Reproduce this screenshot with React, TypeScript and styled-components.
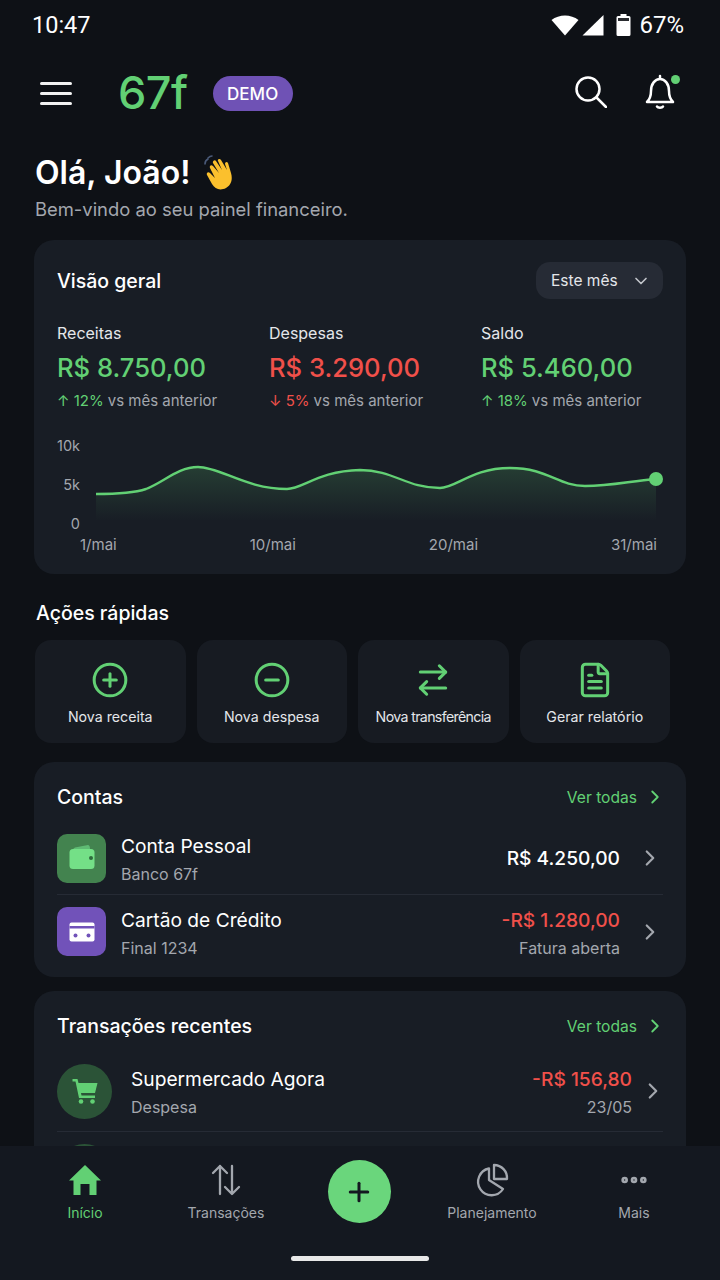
import styled, { createGlobalStyle } from "styled-components";
import {
  ArrowRightLeft,
  ChevronDown,
  ChevronRight,
  CircleMinus,
  CirclePlus,
  Ellipsis,
  FileText,
  Plus,
} from "lucide-react";

const GREEN = "#62d074";
const RED = "#f0504a";

const GlobalStyle = createGlobalStyle`
  html, body {
    margin: 0;
    padding: 0;
    background: #0e1116;
  }
  * {
    box-sizing: border-box;
  }
`;

const Screen = styled.div`
  position: relative;
  width: 720px;
  height: 1280px;
  overflow: hidden;
  background: #0e1116;
  color: #fff;
  font-family: Inter, "Liberation Sans", sans-serif;
`;

const StatusBar = styled.div`
  height: 50px;
  padding: 0 36px 0 32px;
  display: flex;
  align-items: center;
  justify-content: space-between;
`;

const Clock = styled.span`
  font-family: Roboto, sans-serif;
  font-size: 23.5px;
`;

const StatusIcons = styled.div`
  display: flex;
  align-items: center;
  gap: 3px;
`;

const BatteryIcon = styled.svg`
  margin-left: 9px;
`;

const BatteryText = styled.span`
  font-family: Roboto, sans-serif;
  font-size: 24px;
  margin-left: 5px;
`;

const Header = styled.header`
  height: 84px;
  padding: 0 42px 0 40px;
  display: flex;
  align-items: center;
`;

const MenuLines = styled.div`
  width: 32px;
  height: 23px;
  margin-top: 3px;
  display: flex;
  flex-direction: column;
  justify-content: space-between;
  margin-right: 46px;

  span {
    display: block;
    height: 3px;
    border-radius: 2px;
    background: #f2f2f2;
  }
`;

const Logo = styled.span`
  font-size: 45px;
  font-weight: 550;
  color: ${GREEN};
  letter-spacing: -0.5px;
  margin-right: 25px;
`;

const DemoBadge = styled.span`
  width: 80px;
  height: 35px;
  margin-top: 3px;
  border-radius: 18px;
  background: #6f52b5;
  display: flex;
  align-items: center;
  justify-content: center;
  font-size: 17px;
  font-weight: 500;
`;

const HeaderActions = styled.div`
  margin-left: auto;
  display: flex;
  align-items: center;
  gap: 35px;
`;

const BellWrap = styled.div`
  position: relative;
  height: 38px;
`;

const BellDot = styled.span`
  position: absolute;
  top: 2px;
  right: -2px;
  width: 9px;
  height: 9px;
  border-radius: 50%;
  background: ${GREEN};
`;

const Content = styled.main`
  padding: 0 34px;
`;

const Greeting = styled.h1`
  margin: 17px 0 0 1px;
  height: 44px;
  font-size: 32px;
  line-height: 44px;
  font-weight: 600;
  display: flex;
  align-items: center;
  gap: 14px;
`;

const Subtitle = styled.p`
  margin: 2px 0 0 1px;
  height: 24px;
  font-size: 18.4px;
  line-height: 24px;
  color: #a3a7ae;
`;

const Card = styled.section<{ $top?: number; $bottom: number }>`
  margin-top: ${(p) => p.$top ?? 0}px;
  background: #181d25;
  border-radius: 20px;
  padding: 22px 23px ${(p) => p.$bottom}px;
`;

const CardHeader = styled.div`
  display: flex;
  align-items: center;
  justify-content: space-between;
  min-height: 26px;
`;

const CardTitle = styled.h2`
  margin: 0;
  font-size: 19.5px;
  line-height: 26px;
  font-weight: 500;
`;

const PeriodButton = styled.button`
  width: 127px;
  height: 37px;
  border: none;
  border-radius: 14px;
  background: #262b35;
  color: #e4e6ea;
  font-family: inherit;
  font-size: 15.5px;
  display: flex;
  align-items: center;
  justify-content: space-between;
  padding: 0 12px 0 15px;
`;

const Stats = styled.div`
  margin-top: 24px;
  display: grid;
  grid-template-columns: 212px 212px 1fr;
`;

const StatLabel = styled.div`
  font-size: 16px;
  line-height: 20px;
  color: #e4e6ea;
`;

const StatValue = styled.div<{ $color: string }>`
  margin-top: 8px;
  font-size: 25.6px;
  line-height: 34px;
  font-weight: 500;
  color: ${(p) => p.$color};
`;

const StatDelta = styled.div`
  margin-top: 6px;
  font-size: 15px;
  line-height: 20px;
  color: #a3a7ae;
  display: flex;
  align-items: center;
  white-space: nowrap;
`;

const DeltaValue = styled.span<{ $color: string }>`
  color: ${(p) => p.$color};
  display: inline-flex;
  align-items: center;
  gap: 4px;
  margin-right: 4px;
`;

const Chart = styled.div`
  margin-top: 24px;
  display: grid;
  grid-template-columns: 39px 1fr;
  grid-template-rows: 98px 20px;
  row-gap: 2px;
`;

const YAxis = styled.div`
  display: flex;
  flex-direction: column;
  justify-content: space-between;
  align-items: flex-end;
  padding: 2px 16px 0 0;
  width: 39px;
  font-size: 14.5px;
  line-height: 18px;
  color: #a3a7ae;
  white-space: nowrap;
`;

const Plot = styled.svg`
  display: block;
`;

const XAxis = styled.div`
  grid-column: 1 / 3;
  display: flex;
  justify-content: space-between;
  padding-left: 23px;
  padding-right: 6px;
  font-size: 15px;
  line-height: 20px;
  color: #a3a7ae;
`;

const SectionTitle = styled.h2`
  margin: 26px 0 0 2px;
  font-size: 19.5px;
  line-height: 26px;
  font-weight: 500;
`;

const Actions = styled.div`
  margin: 14px 0 0 1px;
  width: 635px;
  display: grid;
  grid-template-columns: repeat(4, 1fr);
  gap: 11px;
`;

const ActionCard = styled.button`
  height: 103px;
  border: none;
  border-radius: 16px;
  background: #171b22;
  color: #e4e6ea;
  font-family: inherit;
  font-size: 14.2px;
  display: flex;
  flex-direction: column;
  align-items: center;
  padding: 21px 0 0;
  gap: 9px;
  white-space: nowrap;
`;

const ActionLabel = styled.span<{ $tight?: boolean }>`
  letter-spacing: ${(p) => (p.$tight ? "-0.65px" : "0")};
`;

const SeeAll = styled.a`
  display: flex;
  align-items: center;
  gap: 7px;
  margin-right: -3px;
  font-size: 15.6px;
  color: ${GREEN};
`;

const Rows = styled.div`
  margin-top: 12px;
`;

const Row = styled.div<{ $height: number; $divider?: boolean }>`
  height: ${(p) => p.$height}px;
  display: flex;
  align-items: center;
  border-bottom: ${(p) => (p.$divider ? "1px solid #262b35" : "none")};
`;

const AccountIcon = styled.div<{ $bg: string }>`
  width: 49px;
  height: 49px;
  border-radius: 10px;
  background: ${(p) => p.$bg};
  display: flex;
  align-items: center;
  justify-content: center;
  margin-right: 15px;
`;

const TransactionIcon = styled.div`
  width: 55px;
  height: 55px;
  border-radius: 50%;
  background: #2b5337;
  display: flex;
  align-items: center;
  justify-content: center;
  margin-right: 19px;
`;

const RowText = styled.div`
  flex: 1;
  padding-top: 3px;
`;

const RowName = styled.div`
  font-size: 19.2px;
  line-height: 26px;
`;

const RowSub = styled.div`
  margin-top: 3px;
  font-size: 16px;
  line-height: 24px;
  color: #a3a7ae;
`;

const RowAmounts = styled.div<{ $gap: number }>`
  text-align: right;
  margin-right: ${(p) => p.$gap}px;

  &:has(> :nth-child(2)) {
    padding-top: 3px;
  }
`;

const Amount = styled.div<{ $color?: string }>`
  font-size: 19.2px;
  line-height: 26px;
  font-weight: 500;
  color: ${(p) => p.$color ?? "#fff"};
`;

const RowChevron = styled(ChevronRight)`
  color: #a3a7ae;
`;

const TransactionChevron = styled(RowChevron)`
  margin-right: -3px;
`;

const Peek = styled(TransactionIcon)`
  margin-top: 12px;
`;

const BottomNav = styled.nav`
  position: absolute;
  left: 0;
  right: 0;
  bottom: 0;
  height: 134px;
  background: #141820;
`;

const Tabs = styled.div`
  display: grid;
  grid-template-columns: 170px 112px 154px 112px 172px;
  padding-top: 14px;
`;

const Tab = styled.div<{ $active?: boolean }>`
  display: flex;
  flex-direction: column;
  align-items: center;
  font-size: 14px;
  line-height: 18px;
  color: ${(p) => (p.$active ? GREEN : "#a3a7ae")};
  gap: 4px;
  white-space: nowrap;
`;

const TabIcon = styled.div`
  height: 40px;
  display: flex;
  align-items: center;
  justify-content: center;
`;

const Fab = styled.button`
  justify-self: center;
  width: 63px;
  height: 63px;
  border: none;
  border-radius: 50%;
  background: #6ad67c;
  color: #141820;
  display: flex;
  align-items: center;
  justify-content: center;
`;

const HomeIndicator = styled.div`
  position: absolute;
  left: 291px;
  bottom: 19px;
  width: 138px;
  height: 5px;
  border-radius: 3px;
  background: #e8e8e8;
`;

const linePath =
  "M0 59 C22 59 38 58 50 54 C68 47 82 32 102 32 C124 32 150 54 191 54 C207 54 222 36 264 35 C298 35 310 53 344 53 C360 53 376 33 414 33 C452 33 462 51 489 51 C516 51 534 46 560 44";

function WaveEmoji() {
  return (
    <svg width="34" height="36" viewBox="0 0 34 36">
      <path d="M4 4c-2 1-3 2-3 5M8 1C6 1 5 2 4 3" stroke="#4a5a78" strokeWidth="1.6" fill="none" strokeLinecap="round" />
      <path
        d="M6 13c-1-2 1-4 3-2l6 7-6-10c-1-2 2-4 3-2l6 9-4-9c-1-2 2-3 3-1l6 10-2-6c0-2 2-3 3-1l3 10c2 7 0 12-5 15-6 3-11 1-14-4L3 20c-1-2 1-4 3-2l5 5z"
        fill="#fbc02d"
      />
    </svg>
  );
}

function App() {
  return (
    <Screen>
      <GlobalStyle />
      <StatusBar>
        <Clock>10:47</Clock>
        <StatusIcons>
          <svg width="28" height="24" viewBox="0 0 28 24">
            <path d="M14 22.500 0.500 7C8 1 20 1 27.500 7z" fill="#fff" />
          </svg>
          <svg width="22" height="24" viewBox="0 0 22 24">
            <path d="M21.500 2v20.500H0.500z" fill="#fff" />
          </svg>
          <BatteryIcon width="15" height="24" viewBox="0 0 15 24">
            <path d="M4.500 1h6v2h2.500a1.500 1.500 0 0 1 1.500 1.500V21.500a1.500 1.500 0 0 1-1.500 1.500H2a1.500 1.500 0 0 1-1.500-1.500V4.500A1.500 1.500 0 0 1 2 3h2.500z" fill="#fff" />
            <rect x="2" y="5" width="11" height="3" fill="#2a2c30" />
          </BatteryIcon>
          <BatteryText>67%</BatteryText>
        </StatusIcons>
      </StatusBar>

      <Header>
        <MenuLines>
          <span />
          <span />
          <span />
        </MenuLines>
        <Logo>67f</Logo>
        <DemoBadge>DEMO</DemoBadge>
        <HeaderActions>
          <svg width="32" height="32" viewBox="0 0 32 32" fill="none" stroke="#fff" strokeWidth="2.500" strokeLinecap="round">
            <circle cx="13" cy="13" r="11.500" />
            <path d="M21.500 21.500 31 31" />
          </svg>
          <BellWrap>
            <svg width="36" height="38" viewBox="0 0 36 38" fill="none" stroke="#fff" strokeWidth="2.500" strokeLinecap="round" strokeLinejoin="round">
              <path d="M18 3v3M5 29c3-3 4-6 4-11 0-7 4-12 9-12s9 5 9 12c0 5 1 8 4 11zM15 33.500c1 1.500 5 1.500 6 0" />
            </svg>
            <BellDot />
          </BellWrap>
        </HeaderActions>
      </Header>

      <Content>
        <Greeting>
          Olá, João! <WaveEmoji />
        </Greeting>
        <Subtitle>Bem-vindo ao seu painel financeiro.</Subtitle>

        <Card $top={19} $bottom={19}>
          <CardHeader>
            <CardTitle>Visão geral</CardTitle>
            <PeriodButton>
              Este mês <ChevronDown size={20} color="#c2c5ca" />
            </PeriodButton>
          </CardHeader>
          <Stats>
            <div>
              <StatLabel>Receitas</StatLabel>
              <StatValue $color={GREEN}>R$ 8.750,00</StatValue>
              <StatDelta>
                <DeltaValue $color={GREEN}>↑ 12%</DeltaValue> vs mês anterior
              </StatDelta>
            </div>
            <div>
              <StatLabel>Despesas</StatLabel>
              <StatValue $color={RED}>R$ 3.290,00</StatValue>
              <StatDelta>
                <DeltaValue $color={RED}>↓ 5%</DeltaValue> vs mês anterior
              </StatDelta>
            </div>
            <div>
              <StatLabel>Saldo</StatLabel>
              <StatValue $color={GREEN}>R$ 5.460,00</StatValue>
              <StatDelta>
                <DeltaValue $color={GREEN}>↑ 18%</DeltaValue> vs mês anterior
              </StatDelta>
            </div>
          </Stats>
          <Chart>
            <YAxis>
              <span>10k</span>
              <span>5k</span>
              <span>0</span>
            </YAxis>
            <Plot width="567" height="98" viewBox="0 0 567 98">
              <defs>
                <linearGradient id="area" x1="0" y1="0" x2="0" y2="1">
                  <stop offset="0" stopColor={GREEN} stopOpacity="0.18" />
                  <stop offset="1" stopColor={GREEN} stopOpacity="0" />
                </linearGradient>
              </defs>
              <path d={`${linePath} L560 86 L0 86 Z`} fill="url(#area)" />
              <path d={linePath} fill="none" stroke={GREEN} strokeWidth="2.400" />
              <circle cx="560" cy="44" r="7" fill={GREEN} />
            </Plot>
            <XAxis>
              <span>1/mai</span>
              <span>10/mai</span>
              <span>20/mai</span>
              <span>31/mai</span>
            </XAxis>
          </Chart>
        </Card>

        <SectionTitle>Ações rápidas</SectionTitle>
        <Actions>
          <ActionCard>
            <CirclePlus size={38} color={GREEN} strokeWidth={1.9} />
            <ActionLabel>Nova receita</ActionLabel>
          </ActionCard>
          <ActionCard>
            <CircleMinus size={38} color={GREEN} strokeWidth={1.9} />
            <ActionLabel>Nova despesa</ActionLabel>
          </ActionCard>
          <ActionCard>
            <ArrowRightLeft size={38} color={GREEN} strokeWidth={1.9} />
            <ActionLabel $tight>Nova transferência</ActionLabel>
          </ActionCard>
          <ActionCard>
            <FileText size={38} color={GREEN} strokeWidth={1.9} />
            <ActionLabel>Gerar relatório</ActionLabel>
          </ActionCard>
        </Actions>

        <Card $top={19} $bottom={9}>
          <CardHeader>
            <CardTitle>Contas</CardTitle>
            <SeeAll>
              Ver todas <ChevronRight size={22} />
            </SeeAll>
          </CardHeader>
          <Rows>
            <Row $height={73} $divider>
              <AccountIcon $bg="#43834f">
                <svg width="28" height="28" viewBox="0 0 28 28">
                  <path d="M5 6c0-1 1-2 2-2.500L20 1c1 0 2 1 2 4H7z" fill="#5fbb74" />
                  <rect x="1.500" y="5" width="25" height="20" rx="3.500" fill="#74e087" />
                  <circle cx="23" cy="14" r="2" fill="#2f6a3d" />
                </svg>
              </AccountIcon>
              <RowText>
                <RowName>Conta Pessoal</RowName>
                <RowSub>Banco 67f</RowSub>
              </RowText>
              <RowAmounts $gap={17}>
                <Amount>R$ 4.250,00</Amount>
              </RowAmounts>
              <RowChevron size={26} />
            </Row>
            <Row $height={73}>
              <AccountIcon $bg="#7152b9">
                <svg width="26" height="20" viewBox="0 0 26 20">
                  <rect x="0.500" y="0.500" width="25" height="19" rx="2" fill="#fff" />
                  <rect x="0.500" y="4" width="25" height="2.500" fill="#7152b9" />
                  <circle cx="6.500" cy="13.500" r="2" fill="#7152b9" />
                  <circle cx="19.500" cy="13.500" r="2" fill="#7152b9" />
                </svg>
              </AccountIcon>
              <RowText>
                <RowName>Cartão de Crédito</RowName>
                <RowSub>Final 1234</RowSub>
              </RowText>
              <RowAmounts $gap={17}>
                <Amount $color={RED}>-R$ 1.280,00</Amount>
                <RowSub>Fatura aberta</RowSub>
              </RowAmounts>
              <RowChevron size={26} />
            </Row>
          </Rows>
        </Card>

        <Card $top={14} $bottom={22}>
          <CardHeader>
            <CardTitle>Transações recentes</CardTitle>
            <SeeAll>
              Ver todas <ChevronRight size={22} />
            </SeeAll>
          </CardHeader>
          <Rows>
            <Row $height={81} $divider>
              <TransactionIcon>
                <svg width="26" height="26" viewBox="0 0 26 26" fill={GREEN}>
                  <path d="M0.500 1h5l1 4h19l-2.500 10H9l0.500 2.500H23V20H7L3.500 3.500h-3z" />
                  <circle cx="9" cy="23.500" r="2.300" />
                  <circle cx="20.500" cy="23.500" r="2.300" />
                </svg>
              </TransactionIcon>
              <RowText>
                <RowName>Supermercado Agora</RowName>
                <RowSub>Despesa</RowSub>
              </RowText>
              <RowAmounts $gap={8}>
                <Amount $color={RED}>-R$ 156,80</Amount>
                <RowSub>23/05</RowSub>
              </RowAmounts>
              <TransactionChevron size={26} />
            </Row>
          </Rows>
          <Peek />
        </Card>
      </Content>

      <BottomNav>
        <Tabs>
          <Tab $active>
            <TabIcon>
              <svg width="34" height="32" viewBox="0 0 34 32" fill={GREEN}>
                <path d="M17 1 33 16.500h-4.500V31h-7V20h-9v11h-7V16.500H1z" strokeLinejoin="round" />
              </svg>
            </TabIcon>
            Início
          </Tab>
          <Tab>
            <TabIcon>
              <svg width="30" height="32" viewBox="0 0 30 32" fill="none" stroke="#a3a7ae" strokeWidth="2.300" strokeLinecap="round" strokeLinejoin="round">
                <path d="M9 30V2M2 9l7-7 7 7M21 2v28M14 23l7 7 7-7" />
              </svg>
            </TabIcon>
            Transações
          </Tab>
          <Fab>
            <Plus size={30} strokeWidth={2.400} />
          </Fab>
          <Tab>
            <TabIcon>
              <svg width="34" height="34" viewBox="0 0 34 34" fill="none" stroke="#a3a7ae" strokeWidth="2.300" strokeLinejoin="round" strokeLinecap="round">
                <path d="M14 5.500A13.500 13.500 0 1 0 28 26L14 17z" />
                <path d="M19 2a13 13 0 0 1 13 14H19z" />
              </svg>
            </TabIcon>
            Planejamento
          </Tab>
          <Tab>
            <TabIcon>
              <Ellipsis size={32} strokeWidth={3} />
            </TabIcon>
            Mais
          </Tab>
        </Tabs>
        <HomeIndicator />
      </BottomNav>
    </Screen>
  );
}

export default App;
